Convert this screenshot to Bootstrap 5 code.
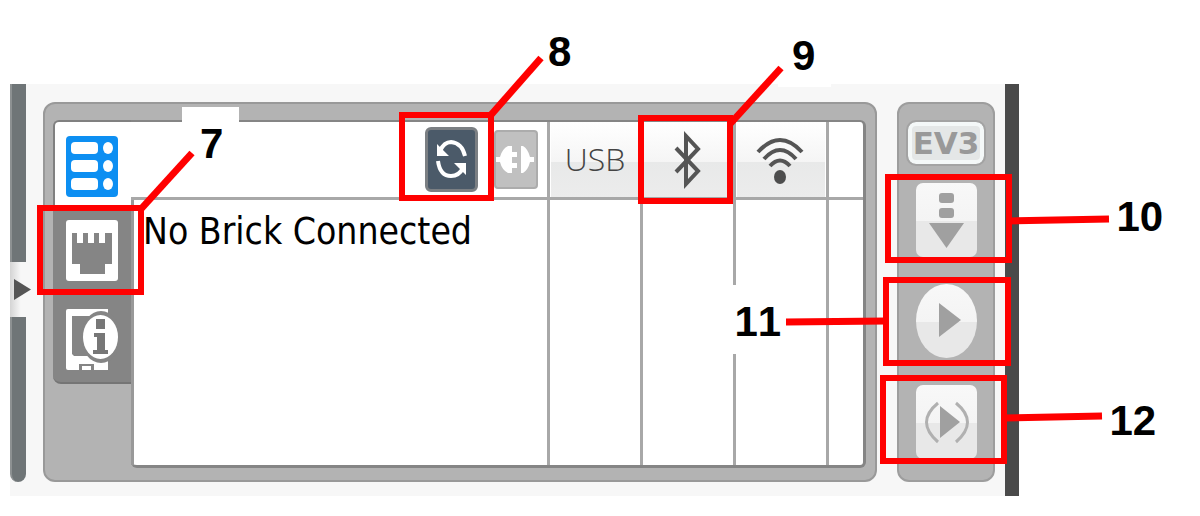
<!DOCTYPE html>
<html lang="en">
<head>
<meta charset="utf-8">
<meta name="viewport" content="width=device-width, initial-scale=1">
<title>EV3 hardware page</title>
<link href="https://cdn.jsdelivr.net/npm/bootstrap@5.3.0/dist/css/bootstrap.min.css" rel="stylesheet">
<style>
  body { background: #fff; font-family: "Liberation Sans", Arial, sans-serif; color: #000; }
  button { border: 0; padding: 0; background: none; display: block; }
  svg { display: block; }

  .app { margin: 84px 181px 20px 10px; background: #f7f7f7; }
  .app-body { padding: 18px 10px 14px 17px; gap: 20px; }
  .app-edge { width: 14px; background: #4a4a4a; }

  /* Splitter rail on the left */
  .rail { width: 16px; margin-bottom: 14px; }
  .rail-part { background: #6f7577; border-left: 2px solid #8d9192; }
  .rail-upper { height: 178px; }
  .rail-lower { border-radius: 0 0 8px 8px; }
  .rail-handle { width: 18px; height: 55px; background: linear-gradient(90deg, #d4d4d4, #f7f7f7 60%); }

  /* Main panel */
  .panel { background: #b3b3b3; border: 2px solid #999; border-radius: 12px; padding: 16px 9px 12px 8px; }
  .tabs { width: 78px; }
  .tab { width: 78px; height: 89px; padding: 14px 13px; background: #858585; }
  .tab-active { height: 86px; background: #fff; border-top: 2px solid #808080; border-left: 2px solid #808080; border-top-left-radius: 6px; padding-left: 11px; }
  .tab-last { border-bottom: 2px solid #757575; border-bottom-left-radius: 8px; }
  .view { background: #fff; border: solid #858585; border-width: 2px 3px 3px 0; border-radius: 0 6px 6px 6px; }

  .bricks { table-layout: fixed; border-collapse: separate; border-spacing: 0; }
  .bricks th, .bricks td { padding: 0; border: 0 solid #a8a8a8; border-left-width: 3px; font-weight: 400; vertical-align: top; }
  .bricks th { height: 78px; border-bottom-width: 3px; }
  .bricks th:first-child { border-left-width: 0; }
  .bricks td { height: 265px; }
  .bricks td:first-child { border-left-color: #999; }
  .col-link { width: 93px; }
  .col-end { width: 37px; }
  .link-head { height: 75px; font: 300 32px/74px "Open Sans", "Noto Sans", sans-serif; color: #444; border-right: 1px solid #fff; border-left: 1px solid #fff;
    background: linear-gradient(#fff, #f5f5f5 53%, #e8e9e9 53%, #ececec); }
  .tools { height: 75px; padding-right: 9px; gap: 16px; }
  .tool-refresh { width: 53px; height: 65px; border: 3px solid #7b7f83; border-radius: 6px; background: #4b5a69; }
  .tool-connect { width: 44px; height: 59px; border: 2px solid #acacac; border-radius: 4px; background: #c0c0c0; }
  .brick-name { font: 37px/46px "DejaVu Sans Condensed", "Noto Sans", sans-serif; padding: 9px 0 0 9px; white-space: nowrap; }

  /* Download and run column */
  .runbar { width: 98px; background: #b3b3b3; border: 2px solid #9d9d9d; border-radius: 12px; padding-top: 18px; }
  .ev3 { width: 76px; height: 42px; margin-bottom: 19px; border: 4px solid #f4f8f8; border-radius: 8px; background: #e4e7e7; outline: 2px solid #a3a3a3;
    color: #999; font: bold 31px/34px "DejaVu Sans", sans-serif; }
  .run-list { gap: 27px; }
  .run { width: 61px; height: 74px; border-radius: 7px; background: linear-gradient(#f8f8f8, #f4f4f4 51%, #e8e8e8 51%, #e8e8e8); }
  .run-play { border-radius: 50%; }

  /* Numbered callouts, each hung on the control that it names */
  .callout { position: absolute; z-index: 5; pointer-events: none; }
  .callout svg { position: relative; overflow: visible; fill: none; stroke: #f00; }
  .callout rect { stroke-width: 6px; }
  .callout line { stroke-width: 7px; }
  .num { position: absolute; font: bold 42px/48px "Liberation Sans", Arial, sans-serif; font-kerning: none; color: #000; }
  .patch { position: absolute; background: #fff; }
  .c7 { left: -16px; top: -1px; }
  .c7 .patch { left: 145px; top: -98px; width: 57px; height: 70px; }
  .c7 .num { left: 163px; top: -85px; }
  .c8 { left: -26px; top: -15px; }
  .c8 .num { left: 149px; top: -84px; }
  .c9 { left: -6px; top: -7px; }
  .c9 .patch { left: 140px; top: -31px; width: 53px; height: 3px; }
  .c9 .num { left: 154px; top: -83px; }
  .c10 { left: -31px; top: -9px; }
  .c10 .num { left: 232px; top: 19px; }
  .c11 { left: -33px; top: -7px; }
  .c11 .patch { left: -159px; top: 8px; width: 82px; height: 69px; }
  .c11 .num { left: -148px; top: 21px; }
  .c12 { left: -36px; top: -10px; }
  .c12 .num { left: 230px; top: 22px; }
</style>
</head>
<body>
<main class="app d-flex">
  <div class="rail d-flex flex-column flex-shrink-0">
    <div class="rail-part rail-upper"></div>
    <button class="rail-handle" aria-label="Collapse">
      <svg width="22" height="55" viewBox="0 0 22 55"><path d="M4 17 21 27.500 4 38z" fill="#555"/></svg>
    </button>
    <div class="rail-part rail-lower flex-grow-1"></div>
  </div>

  <div class="app-body d-flex flex-grow-1">
    <section class="panel d-flex flex-grow-1">
      <nav class="tabs flex-shrink-0">
        <button class="tab tab-active" aria-label="Available bricks">
          <svg width="52" height="61" viewBox="0 0 52 61"><rect width="52" height="61" rx="4" fill="#0d8ff2"/><g fill="#fff"><rect x="5" y="6" width="27" height="12" rx="4"/><rect x="5" y="24" width="27" height="12" rx="4"/><rect x="5" y="42" width="27" height="12" rx="4"/><ellipse cx="42" cy="12" rx="5" ry="6"/><ellipse cx="42" cy="30" rx="5" ry="6"/><ellipse cx="42" cy="48" rx="5" ry="6"/></g></svg>
        </button>
        <div class="position-relative">
          <button class="tab" aria-label="Port view">
            <svg width="52" height="61" viewBox="0 0 52 61"><rect width="52" height="61" rx="3" fill="#fff"/><path d="M6 13h5v10h6V13h5v10h6V13h5v10h6V13h7v31h-7v10H14V44H6z" fill="#858585"/></svg>
          </button>
          <div class="callout c7"><span class="patch"></span>
            <svg width="107" height="90"><rect x="3" y="3" width="101" height="84"/><line x1="104" y1="4" x2="155" y2="-52"/></svg>
            <span class="num">7</span></div>
        </div>
        <button class="tab tab-last" aria-label="Brick information">
          <svg width="52" height="62" viewBox="0 0 52 62"><path d="M2 0h40v61H28v-5H14v5H2a2 2 0 0 1-2-2V2a2 2 0 0 1 2-2z" fill="#fff"/><path d="M6 7h30v40H8l-2-2z" fill="#858585"/><path d="M13 61v-6h15v6z" fill="#858585"/><path d="M16 57h9v4h-9z" fill="#fff"/><ellipse cx="35" cy="28" rx="20" ry="26" fill="#858585"/><ellipse cx="34.500" cy="28" rx="17.500" ry="22" fill="#fff"/><path d="M30 10h9v10h-9zM28 24h11v17h3v4H27v-4h4V28h-3z" fill="#777"/></svg>
        </button>
      </nav>

      <div class="view flex-grow-1">
        <table class="bricks w-100">
          <colgroup><col><col class="col-link"><col class="col-link"><col class="col-link"><col class="col-end"></colgroup>
          <thead>
            <tr>
              <th>
                <div class="tools d-flex justify-content-end align-items-center">
                  <div class="position-relative">
                    <button class="tool-refresh" aria-label="Refresh">
                      <svg width="47" height="59" viewBox="0 0 47 59"><g fill="none" stroke="#fff" stroke-width="4"><path d="M12 21Q16 12 23 12 34 13 37 26"/><path d="M10 31Q12 46 23 46 31 46 35 38"/></g><path d="M9 14v12h12zM38 45V33H26z" fill="#fff"/></svg>
                    </button>
                    <div class="callout c8">
                      <svg width="95" height="89"><rect x="3" y="3" width="89" height="83"/><line x1="91" y1="4" x2="142" y2="-54"/></svg>
                      <span class="num">8</span></div>
                  </div>
                  <button class="tool-connect" aria-label="Connect">
                    <svg width="40" height="55" viewBox="0 0 40 55"><path d="M0 25h4Q6 17 12 14h4v6h5v5h-5v6h5v5h-5v5h-4Q6 38 4 30H0zM25 14h2q5 3 7 11h4v5h-4q-2 8-7 11h-2z" fill="#fff"/></svg>
                  </button>
                </div>
              </th>
              <th><div class="link-head text-center">USB</div></th>
              <th>
                <div class="link-head position-relative">
                  <svg width="90" height="75" viewBox="0 0 90 75" role="img" aria-label="Bluetooth"><path d="M32 26 54 49 42 62V14L54 27 32 50" fill="none" stroke="#555" stroke-width="4"/></svg>
                  <div class="callout c9"><span class="patch"></span>
                    <svg width="95" height="89"><rect x="3" y="3" width="89" height="83"/><line x1="92" y1="9" x2="143" y2="-47"/></svg>
                    <span class="num">9</span></div>
                </div>
              </th>
              <th>
                <div class="link-head">
                  <svg width="88" height="75" viewBox="0 0 88 75" role="img" aria-label="Wi-Fi"><g fill="none" stroke="#555" stroke-width="4"><path d="M21 30Q43 6 65 30"/><path d="M27 37Q43 19 59 37"/><path d="M33 44Q43 33 53 44"/></g><ellipse cx="43" cy="55" rx="6" ry="7" fill="#4d4d4d"/></svg>
                </div>
              </th>
              <th></th>
            </tr>
          </thead>
          <tbody>
            <tr><td><div class="brick-name">No Brick Connected</div></td><td></td><td></td><td></td><td></td></tr>
          </tbody>
        </table>
      </div>
    </section>

    <aside class="runbar d-flex flex-column align-items-center flex-shrink-0">
      <div class="ev3 d-flex justify-content-center">EV3</div>
      <div class="run-list d-flex flex-column">
        <div class="position-relative">
          <button class="run" aria-label="Download">
            <svg width="61" height="74" viewBox="0 0 61 74"><g fill="#a0a0a0"><rect x="23" y="10" width="15" height="10" rx="3"/><rect x="23" y="25" width="15" height="10" rx="3"/><path d="M13 40h35L30.500 65z"/></g></svg>
          </button>
          <div class="callout c10">
            <svg width="127" height="89"><rect x="3" y="3" width="121" height="83"/><line x1="124" y1="47" x2="224" y2="45"/></svg>
            <span class="num">10</span></div>
        </div>
        <div class="position-relative">
          <button class="run run-play" aria-label="Download and run">
            <svg width="61" height="74" viewBox="0 0 61 74"><path d="M23 19 45 36 23 53z" fill="#a0a0a0"/></svg>
          </button>
          <div class="callout c11"><span class="patch"></span>
            <svg width="128" height="89"><rect x="3" y="3" width="122" height="83"/><line x1="-97" y1="45" x2="3" y2="44"/></svg>
            <span class="num">11</span></div>
        </div>
        <div class="position-relative">
          <button class="run" aria-label="Download and run selected">
            <svg width="61" height="74" viewBox="0 0 61 74"><path d="M24 21 44 37 24 53z" fill="#a0a0a0"/><path d="M22 18Q-1 37 22 57M40 18Q63 37 40 57" fill="none" stroke="#b0b0b0" stroke-width="3"/></svg>
          </button>
          <div class="callout c12">
            <svg width="127" height="89"><rect x="3" y="3" width="121" height="83"/><line x1="124" y1="43" x2="222" y2="41"/></svg>
            <span class="num">12</span></div>
        </div>
      </div>
    </aside>
  </div>
  <div class="app-edge flex-shrink-0"></div>
</main>
<script src="https://cdn.jsdelivr.net/npm/bootstrap@5.3.0/dist/js/bootstrap.bundle.min.js"></script>
</body>
</html>
